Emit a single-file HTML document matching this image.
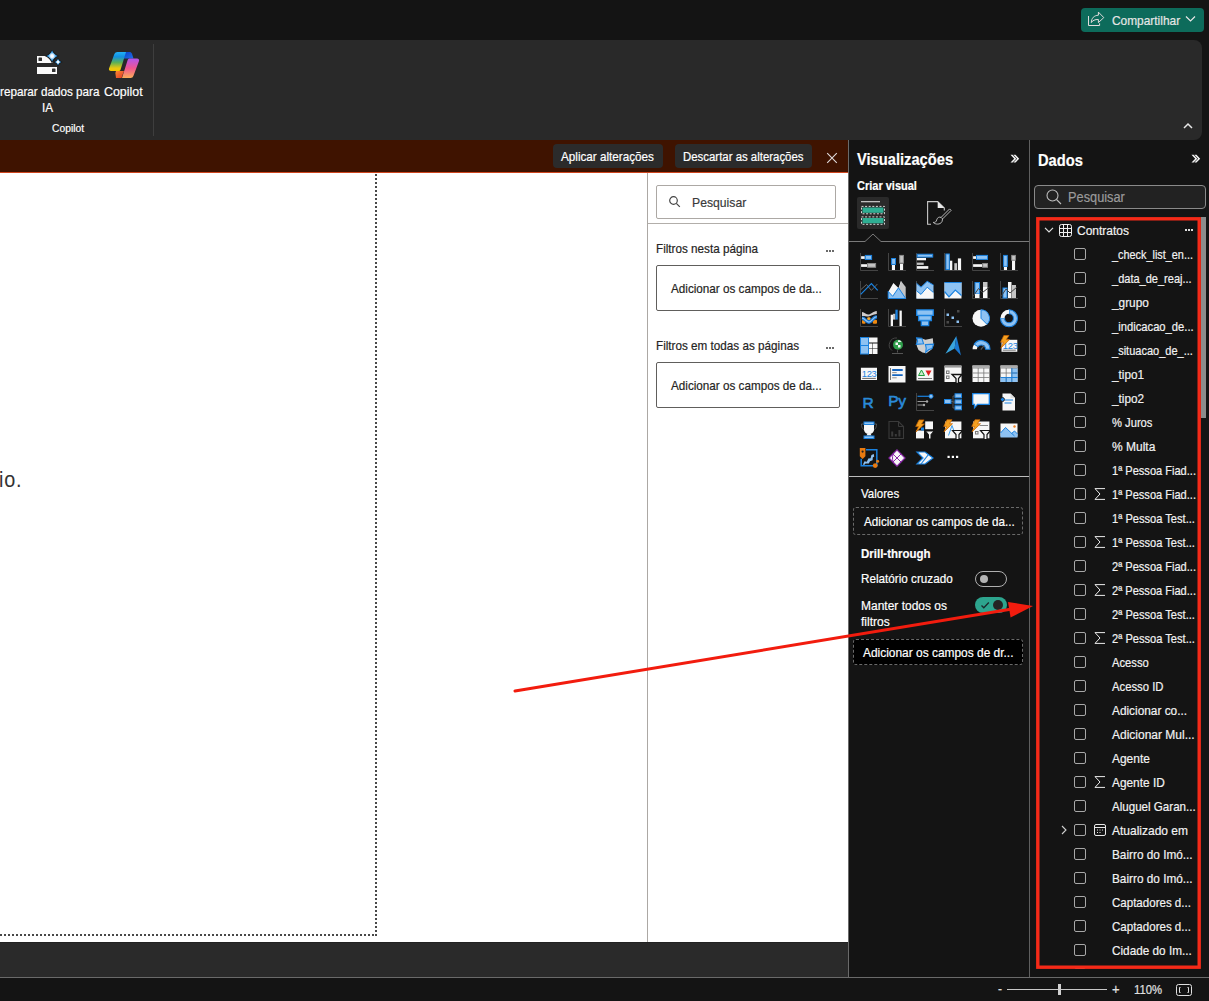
<!DOCTYPE html>
<html><head><meta charset="utf-8">
<style>
*{box-sizing:border-box;margin:0;padding:0}
html,body{width:1209px;height:1001px;overflow:hidden;background:#141414;font-family:"Liberation Sans",sans-serif;color:#fff}
.a{position:absolute}
.t{position:absolute;white-space:nowrap;font-size:12.75px;line-height:14px;transform-origin:0 0;transform:scaleX(0.9174)}
.t{-webkit-text-stroke:0.2px currentColor}
</style></head><body>
<!-- top bar -->
<div class="a" style="left:1081px;top:8px;width:123px;height:24px;background:#0d6b5b;border-radius:4px"></div>
<svg class="a" style="left:1087px;top:10px" width="18" height="18" viewBox="0 0 18 18" fill="none" stroke="#e0dcdc" stroke-width="1"><path d="M1.5 6V15.5H12.6V13.3"/><path d="M11.4 2.1L16.8 7.6 11.4 12.6V9.5C8 9.3 5.5 10.5 4.3 12.6 4.5 8 7 5.5 11.4 5.2Z" stroke-linejoin="round"/></svg>
<div class="t" style="left:1112px;top:14px;color:#e6e6e6;font-size:12.97px">Compartilhar</div>
<svg class="a" style="left:1185px;top:15px" width="11" height="8" viewBox="0 0 11 8" fill="none" stroke="#e6e6e6" stroke-width="1.2"><path d="M1 1.5l4.5 4.5 4.5-4.5"/></svg>
<!-- ribbon -->
<div class="a" style="left:-10px;top:40px;width:1212px;height:100px;background:#292929;border-radius:0 8px 8px 0"></div>
<div class="a" style="left:153px;top:44px;width:1px;height:92px;background:#3e3e3e"></div>
<div class="t" style="left:0px;top:85px;color:#fff">reparar dados para</div>
<div class="t" style="left:42px;top:101px;color:#fff">IA</div>
<div class="t" style="left:104px;top:85px;color:#fff;font-size:13.52px">Copilot</div>
<div class="t" style="left:52px;top:121px;color:#fff;font-size:11.23px">Copilot</div>
<!-- prepare data icon -->
<svg class="a" style="left:34px;top:50px" width="30" height="28" viewBox="0 0 30 28">
<defs><radialGradient id="spk" r=".5"><stop offset="0" stop-color="#fff"/><stop offset=".25" stop-color="#f4faff"/><stop offset=".7" stop-color="#2a98e8"/><stop offset="1" stop-color="#1a86d8"/></radialGradient></defs>
<path d="M3 6h12l4 5v2H3z" fill="#fafafa"/>
<rect x="4.5" y="7.5" width="3.5" height="3.5" rx=".6" fill="#333"/>
<rect x="3" y="17" width="20" height="7" fill="#fafafa"/>
<rect x="18" y="18.5" width="3.5" height="3.5" rx=".6" fill="#333"/>
<path d="M18.1 .3Q19.6 4.5 23.6 6 19.6 7.5 18.1 11.8 16.6 7.5 12.6 6 16.6 4.5 18.1 .3z" fill="#1a1a1a" transform="translate(18.1 6) scale(1.35) translate(-18.1 -6)"/>
<path d="M24 8.7Q24.9 11.1 27.3 12 24.9 12.9 24 15.3 23.1 12.9 20.7 12 23.1 11.1 24 8.7z" fill="#1a1a1a" transform="translate(24 12) scale(1.4) translate(-24 -12)"/>
<path d="M18.1 .3Q19.6 4.5 23.6 6 19.6 7.5 18.1 11.8 16.6 7.5 12.6 6 16.6 4.5 18.1 .3z" fill="url(#spk)"/>
<path d="M24 8.7Q24.9 11.1 27.3 12 24.9 12.9 24 15.3 23.1 12.9 20.7 12 23.1 11.1 24 8.7z" fill="url(#spk)"/>
</svg>
<!-- copilot icon -->
<svg class="a" style="left:104px;top:46px" width="40" height="36" viewBox="0 0 40 36">
<defs>
<linearGradient id="cg1" x1="0" y1="0" x2="0" y2="1"><stop offset="0" stop-color="#22b0f8"/><stop offset=".25" stop-color="#1290e0"/><stop offset=".55" stop-color="#5ab058"/><stop offset=".85" stop-color="#e8c810"/><stop offset="1" stop-color="#f5c800"/></linearGradient>
<linearGradient id="cg2" x1="0" y1="0" x2="0" y2="1"><stop offset="0" stop-color="#b055ee"/><stop offset=".5" stop-color="#f05590"/><stop offset="1" stop-color="#fcae58"/></linearGradient>
<linearGradient id="cg3" x1="0" y1="0" x2="1" y2="1"><stop offset="0" stop-color="#0a40c8"/><stop offset="1" stop-color="#2070e8"/></linearGradient>
<linearGradient id="cg4" x1="0" y1="0" x2="1" y2="1"><stop offset="0" stop-color="#fb8a30"/><stop offset="1" stop-color="#e03828"/></linearGradient>
</defs>
<path d="M20 6h5.5c1.2 0 2 .6 2.4 1.6L29.5 12.5H19z" fill="url(#cg3)"/>
<path d="M12 32h5.5l2.5-7h-8l-.6 2z" fill="url(#cg4)"/>
<path d="M13.5 6H22L16.6 23.5c-.4 1-1 1.5-2 1.5H7c-1.6 0-2.4-1-2-2.5l5.4-14.5C11 6.8 12 6 13.5 6z" fill="url(#cg1)"/>
<path d="M25.5 12.5H33c1.6 0 2.4 1 2 2.5l-5.4 14.5c-.6 1.7-1.6 2.5-3.1 2.5H18l5.5-17.5c.4-1.2 1-2 2-2z" fill="url(#cg2)"/>
</svg>
<svg class="a" style="left:1182px;top:122px" width="12" height="8" viewBox="0 0 12 8" fill="none" stroke="#e8e8e8" stroke-width="1.5"><path d="M2 6l4-4 4 4"/></svg>

<!-- brown bar -->
<div class="a" style="left:0;top:140px;width:848px;height:33px;background:#3f1300;border-bottom:1px solid #d0461e"></div>
<div class="a" style="left:553px;top:144px;width:110px;height:24px;background:#2b2b2b;border-radius:4px"></div>
<div class="t" style="left:561px;top:150px">Aplicar alterações</div>
<div class="a" style="left:675px;top:144px;width:137px;height:24px;background:#2b2b2b;border-radius:4px"></div>
<div class="t" style="left:683px;top:150px;font-size:12.45px">Descartar as alterações</div>
<svg class="a" style="left:826px;top:152px" width="12" height="12" viewBox="0 0 12 12" fill="none" stroke="#e0dcdc" stroke-width="1.1"><path d="M1.2 1.2l9.6 9.6M10.8 1.2l-9.6 9.6"/></svg>

<!-- canvas -->
<div class="a" style="left:0;top:173px;width:648px;height:769px;background:#fff"></div>
<div class="a" style="left:375px;top:174px;width:2px;height:762px;background:repeating-linear-gradient(to bottom,#484848 0 2px,transparent 2px 4px)"></div>
<div class="a" style="left:0px;top:934px;width:375px;height:2px;background:repeating-linear-gradient(to right,#484848 0 2px,transparent 2px 4px)"></div>
<div class="t" style="left:-1px;top:468px;color:#333;font-size:21.6px;line-height:24px;letter-spacing:0.9px;-webkit-text-stroke:0">io.</div>
<div class="a" style="left:0;top:942px;width:848px;height:35px;background:#2a2a2a;border-top:1px solid #222"></div>
<div class="a" style="left:0;top:977px;width:1209px;height:1px;background:#6a6a6a"></div>

<!-- filter pane -->
<div class="a" style="left:647px;top:173px;width:201px;height:769px;background:#fff;border-left:1px solid #aca8a4"></div>
<div class="a" style="left:656px;top:185px;width:180px;height:34px;border:1px solid #aca8a4;border-radius:2px"></div>
<svg class="a" style="left:668px;top:195px" width="14" height="14" viewBox="0 0 14 14" fill="none" stroke="#444" stroke-width="1.2"><circle cx="5.5" cy="5.5" r="3.8"/><path d="M8.3 8.3l3.5 3.5"/></svg>
<div class="t" style="left:692px;top:196px;color:#3a3a3a;font-size:13.30px">Pesquisar</div>
<div class="a" style="left:648px;top:223px;width:200px;height:1px;background:#b2aeaa"></div>
<div class="t" style="left:656px;top:242px;color:#252423">Filtros nesta página</div>
<div class="a" style="left:826px;top:250px;width:2px;height:2px;background:#6a6a6a;box-shadow:3px 0 #6a6a6a,6px 0 #6a6a6a"></div>
<div class="a" style="left:656px;top:265px;width:184px;height:46px;border:1px solid #605e5c;border-radius:2px"></div>
<div class="t" style="left:671px;top:282px;color:#252423">Adicionar os campos de da...</div>
<div class="t" style="left:656px;top:339px;color:#252423">Filtros em todas as páginas</div>
<div class="a" style="left:826px;top:347px;width:2px;height:2px;background:#6a6a6a;box-shadow:3px 0 #6a6a6a,6px 0 #6a6a6a"></div>
<div class="a" style="left:656px;top:362px;width:184px;height:46px;border:1px solid #605e5c;border-radius:2px"></div>
<div class="t" style="left:671px;top:379px;color:#252423">Adicionar os campos de da...</div>

<!-- viz panel -->
<div class="a" style="left:848px;top:140px;width:1px;height:837px;background:#6a6a6a"></div>
<div class="a" style="left:1029px;top:140px;width:1px;height:837px;background:#5f5f5f"></div>
<div class="t" style="left:857px;top:150px;font-size:16.02px;line-height:18px;font-weight:bold">Visualizações</div>
<svg class="a" style="left:1010px;top:154px" width="10" height="10" viewBox="0 0 10 10"><path d="M.5 .8H2.6L6.3 4.7 2.6 8.6H.5L4.2 4.7Z M3.4 .8H5.5L9.2 4.7 5.5 8.6H3.4L7.1 4.7Z" fill="#f4f4f4"/></svg>
<div class="t" style="left:857px;top:180px;font-size:11.99px;line-height:13px;font-weight:bold">Criar visual</div>
<div class="a" style="left:857px;top:197px;width:32px;height:32px;background:#2a2a2a;border-radius:2px"></div>
<svg class="a" style="left:857px;top:197px" width="32" height="32" viewBox="0 0 32 32">
<rect x="4" y="4" width="19" height="1.3" fill="#c0c0c0"/>
<rect x="4.5" y="9.4" width="23" height="7.4" fill="none" stroke="#d8d8d8" stroke-width="1" stroke-dasharray="2 1.6"/>
<rect x="5.5" y="10.5" width="21" height="5.3" fill="#2fae93"/>
<rect x="4.5" y="19.9" width="23" height="7.4" fill="none" stroke="#d8d8d8" stroke-width="1" stroke-dasharray="2 1.6"/>
<rect x="5.5" y="21" width="21" height="5.3" fill="#2fae93"/>
</svg>
<svg class="a" style="left:926px;top:200px" width="26" height="26" viewBox="0 0 26 26" fill="none" stroke="#c8c8c8" stroke-width="1.1">
<path d="M5 24.3H1.6V1.6H11.7L18.3 8.1V10.5"/><path d="M11.7 1.6L18.3 8.1H11.7z" fill="#e8e8e8" stroke="none"/>
<path d="M23.6 8.9L25.1 10.4 16.6 18.9 15.1 17.4Z" stroke-width=".9"/>
<path d="M15.1 17.4C13.2 16.6 11.3 17.6 10.7 19.8 10.3 21.8 9.2 22.6 7.2 22.4 9.3 24.6 14.2 25 16 21.6L16.6 18.9" stroke-width=".9"/>
</svg>
<svg class="a" style="left:849px;top:232px" width="180" height="12" viewBox="0 0 180 12" fill="none" stroke="#7a7a7a" stroke-width="1"><path d="M0 9.5h16l8-7.5 8 7.5H180"/></svg>
<div class="a" style="left:849px;top:476px;width:180px;height:1px;background:#bdbdbd"></div>
<div class="t" style="left:861px;top:487px;font-size:12.54px">Valores</div>
<div class="a" style="left:853px;top:507px;width:170px;height:28px;border:1px dashed #6a6a6a;border-radius:3px"></div>
<div class="t" style="left:864px;top:515px">Adicionar os campos de da...</div>
<div class="t" style="left:861px;top:547px;font-size:12.54px;font-weight:bold">Drill-through</div>
<div class="t" style="left:861px;top:572px">Relatório cruzado</div>
<div class="a" style="left:975px;top:571px;width:32px;height:16px;border:1px solid #b0b0b0;border-radius:8px"></div>
<div class="a" style="left:980px;top:575px;width:8px;height:8px;background:#b5b5b5;border-radius:50%"></div>
<div class="t" style="left:861px;top:599px;font-size:13.08px">Manter todos os</div>
<div class="t" style="left:861px;top:615px;font-size:13.08px">filtros</div>
<div class="a" style="left:975px;top:597px;width:32px;height:16px;background:#2da58e;border-radius:8px"></div>
<div class="a" style="left:993px;top:600px;width:10px;height:10px;background:#242424;border-radius:50%"></div>
<svg class="a" style="left:980px;top:600px" width="10" height="10" viewBox="0 0 10 10" fill="none" stroke="#1a2a2c" stroke-width="1.3"><path d="M1.5 5.5l2.3 2.3L8.8 2.5"/></svg>
<div class="a" style="left:853px;top:639px;width:170px;height:26px;border:1px dashed #6a6a6a;border-radius:3px;background:#000"></div>
<div class="t" style="left:863px;top:646px;font-size:13px">Adicionar os campos de dr...</div>

<!-- dados panel -->
<div class="t" style="left:1038px;top:151px;font-size:16.02px;line-height:18px;font-weight:bold">Dados</div>
<svg class="a" style="left:1191px;top:154px" width="10" height="10" viewBox="0 0 10 10"><path d="M.5 .8H2.6L6.3 4.7 2.6 8.6H.5L4.2 4.7Z M3.4 .8H5.5L9.2 4.7 5.5 8.6H3.4L7.1 4.7Z" fill="#f4f4f4"/></svg>
<div class="a" style="left:1034px;top:185px;width:172px;height:24px;border:1px solid #8a8a8a;border-radius:4px;background:#222"></div>
<svg class="a" style="left:1046px;top:189px" width="16" height="16" viewBox="0 0 16 16" fill="none" stroke="#bdbdbd" stroke-width="1.1"><circle cx="6.5" cy="6.5" r="5.5"/><path d="M10.5 10.5l4.5 4.5"/></svg>
<div class="t" style="left:1068px;top:189px;color:#9a9a9a;font-size:13.95px;line-height:16px">Pesquisar</div>

<!-- DADOS -->
<div class="a" style="left:1036px;top:215px;width:173px;height:754px;overflow:hidden">
<svg class="a" style="left:8px;top:12px" width="10" height="6" viewBox="0 0 10 6" fill="none" stroke="#e0e0e0" stroke-width="1.2"><path d="M1 .8l4 4 4-4"/></svg>
<svg class="a" style="left:23px;top:9px" width="13" height="13" viewBox="0 0 13 13" fill="none" stroke="#f0f0f0" stroke-width="1"><rect x=".5" y=".5" width="12" height="12" rx="2"/><path d="M4.5 .5v12M8.5 .5v12M.5 4.5h12M.5 8.5h12"/></svg>
<div class="t" style="left:41px;top:9px;color:#f2f2f2;font-size:13.08px">Contratos</div>
<div class="a" style="left:149px;top:14px;width:2px;height:2px;background:#e0e0e0;box-shadow:3px 0 #e0e0e0,6px 0 #e0e0e0"></div>
<div class="a" style="left:38px;top:33px;width:12px;height:12px;border:1px solid #a8a8a8;border-radius:2px"></div>
<div class="t" style="left:76px;top:33px;color:#f2f2f2;font-size:11.85px">_check_list_en...</div>
<div class="a" style="left:38px;top:57px;width:12px;height:12px;border:1px solid #a8a8a8;border-radius:2px"></div>
<div class="t" style="left:76px;top:57px;color:#f2f2f2;font-size:12.02px">_data_de_reaj...</div>
<div class="a" style="left:38px;top:81px;width:12px;height:12px;border:1px solid #a8a8a8;border-radius:2px"></div>
<div class="t" style="left:76px;top:81px;color:#f2f2f2;font-size:12.92px">_grupo</div>
<div class="a" style="left:38px;top:105px;width:12px;height:12px;border:1px solid #a8a8a8;border-radius:2px"></div>
<div class="t" style="left:76px;top:105px;color:#f2f2f2;font-size:12.23px">_indicacao_de...</div>
<div class="a" style="left:38px;top:129px;width:12px;height:12px;border:1px solid #a8a8a8;border-radius:2px"></div>
<div class="t" style="left:76px;top:129px;color:#f2f2f2;font-size:12.03px">_situacao_de_...</div>
<div class="a" style="left:38px;top:153px;width:12px;height:12px;border:1px solid #a8a8a8;border-radius:2px"></div>
<div class="t" style="left:76px;top:153px;color:#f2f2f2;font-size:12.8px">_tipo1</div>
<div class="a" style="left:38px;top:177px;width:12px;height:12px;border:1px solid #a8a8a8;border-radius:2px"></div>
<div class="t" style="left:76px;top:177px;color:#f2f2f2;font-size:12.8px">_tipo2</div>
<div class="a" style="left:38px;top:201px;width:12px;height:12px;border:1px solid #a8a8a8;border-radius:2px"></div>
<div class="t" style="left:76px;top:201px;color:#f2f2f2;font-size:12.21px">% Juros</div>
<div class="a" style="left:38px;top:225px;width:12px;height:12px;border:1px solid #a8a8a8;border-radius:2px"></div>
<div class="t" style="left:76px;top:225px;color:#f2f2f2;font-size:13.08px">% Multa</div>
<div class="a" style="left:38px;top:249px;width:12px;height:12px;border:1px solid #a8a8a8;border-radius:2px"></div>
<div class="t" style="left:76px;top:249px;color:#f2f2f2;font-size:12.06px">1ª Pessoa Fiad...</div>
<div class="a" style="left:38px;top:273px;width:12px;height:12px;border:1px solid #a8a8a8;border-radius:2px"></div>
<svg class="a" style="left:58px;top:273px" width="11" height="12" viewBox="0 0 11 12" fill="none" stroke="#ececec" stroke-width="1"><path d="M11 .6H1L6 6 1 11.4H11"/></svg>
<div class="t" style="left:76px;top:273px;color:#f2f2f2;font-size:12.06px">1ª Pessoa Fiad...</div>
<div class="a" style="left:38px;top:297px;width:12px;height:12px;border:1px solid #a8a8a8;border-radius:2px"></div>
<div class="t" style="left:76px;top:297px;color:#f2f2f2;font-size:12.12px">1ª Pessoa Test...</div>
<div class="a" style="left:38px;top:321px;width:12px;height:12px;border:1px solid #a8a8a8;border-radius:2px"></div>
<svg class="a" style="left:58px;top:321px" width="11" height="12" viewBox="0 0 11 12" fill="none" stroke="#ececec" stroke-width="1"><path d="M11 .6H1L6 6 1 11.4H11"/></svg>
<div class="t" style="left:76px;top:321px;color:#f2f2f2;font-size:12.12px">1ª Pessoa Test...</div>
<div class="a" style="left:38px;top:345px;width:12px;height:12px;border:1px solid #a8a8a8;border-radius:2px"></div>
<div class="t" style="left:76px;top:345px;color:#f2f2f2;font-size:12.06px">2ª Pessoa Fiad...</div>
<div class="a" style="left:38px;top:369px;width:12px;height:12px;border:1px solid #a8a8a8;border-radius:2px"></div>
<svg class="a" style="left:58px;top:369px" width="11" height="12" viewBox="0 0 11 12" fill="none" stroke="#ececec" stroke-width="1"><path d="M11 .6H1L6 6 1 11.4H11"/></svg>
<div class="t" style="left:76px;top:369px;color:#f2f2f2;font-size:12.06px">2ª Pessoa Fiad...</div>
<div class="a" style="left:38px;top:393px;width:12px;height:12px;border:1px solid #a8a8a8;border-radius:2px"></div>
<div class="t" style="left:76px;top:393px;color:#f2f2f2;font-size:12.12px">2ª Pessoa Test...</div>
<div class="a" style="left:38px;top:417px;width:12px;height:12px;border:1px solid #a8a8a8;border-radius:2px"></div>
<svg class="a" style="left:58px;top:417px" width="11" height="12" viewBox="0 0 11 12" fill="none" stroke="#ececec" stroke-width="1"><path d="M11 .6H1L6 6 1 11.4H11"/></svg>
<div class="t" style="left:76px;top:417px;color:#f2f2f2;font-size:12.12px">2ª Pessoa Test...</div>
<div class="a" style="left:38px;top:441px;width:12px;height:12px;border:1px solid #a8a8a8;border-radius:2px"></div>
<div class="t" style="left:76px;top:441px;color:#f2f2f2;font-size:12.23px">Acesso</div>
<div class="a" style="left:38px;top:465px;width:12px;height:12px;border:1px solid #a8a8a8;border-radius:2px"></div>
<div class="t" style="left:76px;top:465px;color:#f2f2f2;font-size:12.32px">Acesso ID</div>
<div class="a" style="left:38px;top:489px;width:12px;height:12px;border:1px solid #a8a8a8;border-radius:2px"></div>
<div class="t" style="left:76px;top:489px;color:#f2f2f2;font-size:12.91px">Adicionar co...</div>
<div class="a" style="left:38px;top:513px;width:12px;height:12px;border:1px solid #a8a8a8;border-radius:2px"></div>
<div class="t" style="left:76px;top:513px;color:#f2f2f2;font-size:13.08px">Adicionar Mul...</div>
<div class="a" style="left:38px;top:537px;width:12px;height:12px;border:1px solid #a8a8a8;border-radius:2px"></div>
<div class="t" style="left:76px;top:537px;color:#f2f2f2;font-size:13.04px">Agente</div>
<div class="a" style="left:38px;top:561px;width:12px;height:12px;border:1px solid #a8a8a8;border-radius:2px"></div>
<svg class="a" style="left:58px;top:561px" width="11" height="12" viewBox="0 0 11 12" fill="none" stroke="#ececec" stroke-width="1"><path d="M11 .6H1L6 6 1 11.4H11"/></svg>
<div class="t" style="left:76px;top:561px;color:#f2f2f2;font-size:12.94px">Agente ID</div>
<div class="a" style="left:38px;top:585px;width:12px;height:12px;border:1px solid #a8a8a8;border-radius:2px"></div>
<div class="t" style="left:76px;top:585px;color:#f2f2f2;font-size:12.64px">Aluguel Garan...</div>
<div class="a" style="left:38px;top:609px;width:12px;height:12px;border:1px solid #a8a8a8;border-radius:2px"></div>
<svg class="a" style="left:25px;top:610px" width="6" height="10" viewBox="0 0 6 10" fill="none" stroke="#d0d0d0" stroke-width="1.1"><path d="M1 1l4 4-4 4"/></svg>
<svg class="a" style="left:58px;top:609px" width="12" height="12" viewBox="0 0 12 12" fill="none" stroke="#e8e8e8" stroke-width="1"><rect x=".5" y=".5" width="11" height="11" rx="1.5"/><path d="M.5 3.5h11"/><path d="M3 6h1M5.5 6h1M8 6h1M3 8.5h1M5.5 8.5h1" stroke-width="1.2"/></svg>
<div class="t" style="left:76px;top:609px;color:#f2f2f2;font-size:13.07px">Atualizado em</div>
<div class="a" style="left:38px;top:633px;width:12px;height:12px;border:1px solid #a8a8a8;border-radius:2px"></div>
<div class="t" style="left:76px;top:633px;color:#f2f2f2;font-size:12.87px">Bairro do Imó...</div>
<div class="a" style="left:38px;top:657px;width:12px;height:12px;border:1px solid #a8a8a8;border-radius:2px"></div>
<div class="t" style="left:76px;top:657px;color:#f2f2f2;font-size:12.87px">Bairro do Imó...</div>
<div class="a" style="left:38px;top:681px;width:12px;height:12px;border:1px solid #a8a8a8;border-radius:2px"></div>
<div class="t" style="left:76px;top:681px;color:#f2f2f2;font-size:12.59px">Captadores d...</div>
<div class="a" style="left:38px;top:705px;width:12px;height:12px;border:1px solid #a8a8a8;border-radius:2px"></div>
<div class="t" style="left:76px;top:705px;color:#f2f2f2;font-size:12.59px">Captadores d...</div>
<div class="a" style="left:38px;top:729px;width:12px;height:12px;border:1px solid #a8a8a8;border-radius:2px"></div>
<div class="t" style="left:76px;top:729px;color:#f2f2f2;font-size:12.83px">Cidade do Im...</div>
<div class="a" style="left:38px;top:753px;width:12px;height:12px;border:1px solid #a8a8a8;border-radius:2px"></div>
</div>
<div class="a" style="left:1201px;top:217px;width:5px;height:201px;background:#8c8c8c"></div>
<svg class="a" style="left:1030px;top:210px" width="179" height="765" viewBox="0 0 179 765" fill="none"><rect x="7.8" y="8.8" width="161.4" height="748.4" stroke="#f52a18" stroke-width="3.4"/></svg>
<!-- /DADOS -->
<!-- ICONS -->
<svg class="a" style="left:860px;top:253px;overflow:visible" width="18" height="18" viewBox="0 0 18 18"><path d="M.5 0v17.5H18" fill="none" stroke="#444" stroke-width="1"/><rect x="1.1" y="3.2" width="3.7" height="2.7" fill="#f7f7f7"/><rect x="5.3" y="2.4" width="6.3" height="4" fill="#8ec2f2" stroke="#1a82e0" stroke-width="1"/><rect x="1.1" y="11.2" width="6" height="2.7" fill="#f7f7f7"/><rect x="7.6" y="10.5" width="8" height="3.75" fill="#c4c4c4" stroke="#8a8a8a" stroke-width="1"/></svg>
<svg class="a" style="left:888px;top:253px;overflow:visible" width="18" height="18" viewBox="0 0 18 18"><path d="M.5 0v17.5H18" fill="none" stroke="#444" stroke-width="1"/><rect x="3.9" y="11.9" width="3.1" height="5.1" fill="#f7f7f7"/><rect x="3.6" y="5.5" width="3.9" height="5.9" fill="#8ec2f2" stroke="#1a82e0" stroke-width="1"/><rect x="12" y="10.6" width="3.1" height="6.4" fill="#f7f7f7"/><rect x="11.7" y="2.4" width="3.7" height="7.7" fill="#c4c4c4" stroke="#8a8a8a" stroke-width="1"/></svg>
<svg class="a" style="left:916px;top:253px;overflow:visible" width="18" height="18" viewBox="0 0 18 18"><path d="M.5 0v17.5H18" fill="none" stroke="#444" stroke-width="1"/><rect x="1.2" y="1.2" width="15.5" height="2.9" fill="#8ec2f2" stroke="#1a82e0" stroke-width="1"/><rect x="0.9" y="5" width="9.1" height="2.3" fill="#f7f7f7"/><rect x="0.9" y="9.6" width="6.8" height="2.3" fill="#c4c4c4"/><rect x="0.9" y="13.1" width="11.4" height="2.7" fill="#f7f7f7"/></svg>
<svg class="a" style="left:944px;top:253px;overflow:visible" width="18" height="18" viewBox="0 0 18 18"><path d="M.5 0v17.5H18" fill="none" stroke="#444" stroke-width="1"/><rect x="1.9" y="1" width="3.4" height="15.5" fill="#8ec2f2" stroke="#1a82e0" stroke-width="1"/><rect x="6" y="7.7" width="2.3" height="9.3" fill="#f7f7f7"/><rect x="10.3" y="10.2" width="2.7" height="6.8" fill="#c4c4c4"/><rect x="13.9" y="5.4" width="3.2" height="11.6" fill="#f7f7f7"/></svg>
<svg class="a" style="left:972px;top:253px;overflow:visible" width="18" height="18" viewBox="0 0 18 18"><path d="M.5 0v17.5H18" fill="none" stroke="#444" stroke-width="1"/><rect x="1.1" y="3.2" width="2.9" height="2.7" fill="#f7f7f7"/><rect x="4.5" y="2.4" width="11" height="4" fill="#8ec2f2" stroke="#1a82e0" stroke-width="1"/><rect x="1.1" y="11.2" width="9.1" height="2.7" fill="#f7f7f7"/><rect x="10.7" y="10.5" width="4.8" height="3.75" fill="#c4c4c4" stroke="#8a8a8a" stroke-width="1"/></svg>
<svg class="a" style="left:1000px;top:253px;overflow:visible" width="18" height="18" viewBox="0 0 18 18"><path d="M.5 0v17.5H18" fill="none" stroke="#444" stroke-width="1"/><rect x="3.6" y="2.4" width="3.7" height="11" fill="#8ec2f2" stroke="#1a82e0" stroke-width="1"/><rect x="3.9" y="13.9" width="3.1" height="3.1" fill="#f7f7f7"/><rect x="11.7" y="2.4" width="3.7" height="4.8" fill="#c4c4c4" stroke="#8a8a8a" stroke-width="1"/><rect x="12" y="7.7" width="3.1" height="9.3" fill="#f7f7f7"/></svg>
<svg class="a" style="left:860px;top:281px;overflow:visible" width="18" height="18" viewBox="0 0 18 18"><path d="M.5 0v17.5H18" fill="none" stroke="#444" stroke-width="1"/><path d="M1 8.5L6.5 3.5 11.4 9.4 17.3 3.1" fill="none" stroke="#666" stroke-width="1"/><path d="M.7 13.4L11.4 2.6 17.7 9.4" fill="none" stroke="#1a82e0" stroke-width="1.2"/></svg>
<svg class="a" style="left:888px;top:281px;overflow:visible" width="18" height="18" viewBox="0 0 18 18"><path d="M.5 10.4L5.4 2 10.5 7 13 -.3 17.7 17.5H.5z" fill="#f7f7f7"/><path d="M13 0L17.7 6V17.5L11 7.5z" fill="#c4c4c4"/><path d="M.2 10.4L4.7 15.3 10.5 6.8 17.7 17.5H.2z" fill="#8ec2f2" stroke="#1a82e0" stroke-width="1"/></svg>
<svg class="a" style="left:916px;top:281px;overflow:visible" width="18" height="18" viewBox="0 0 18 18"><path d="M.5 0v17.5H18" fill="none" stroke="#444" stroke-width="1"/><path d="M.5 2.2L5 6.2 11.2 .3 17.5 4V17.5H.5z" fill="#8ec2f2"/><path d="M.5 9.8L5 13.4 11.2 6.2 17.5 11.6V17.5H.5z" fill="#f7f7f7"/><path d="M.5 2.2L5 6.2 11.2 .3 17.5 4M.5 9.8L5 13.4 11.2 6.2 17.5 11.6" fill="none" stroke="#1a82e0" stroke-width="1"/></svg>
<svg class="a" style="left:944px;top:281px;overflow:visible" width="18" height="18" viewBox="0 0 18 18"><path d="M.5 1.5H17.5V17.5H.5z" fill="#f7f7f7"/><path d="M.5 1.5H17.5V14.5L11.3 9.1 5 15.9.5 10.5z" fill="#8ec2f2"/><path d="M.5 1.5H17.5M.5 10.5L5 15.9 11.3 9.1 17.5 14.5" fill="none" stroke="#1a82e0" stroke-width="1.2"/></svg>
<svg class="a" style="left:972px;top:281px;overflow:visible" width="18" height="18" viewBox="0 0 18 18"><path d="M.5 0v17.5H18" fill="none" stroke="#444" stroke-width="1"/><rect x="3" y="1.5" width="4.5" height="11.5" fill="#8ec2f2" stroke="#1a82e0" stroke-width="1"/><rect x="3" y="13" width="4.5" height="4" fill="#f7f7f7"/><rect x="11" y="1" width="4.5" height="5" fill="#c4c4c4"/><rect x="11" y="6" width="4.5" height="11" fill="#f7f7f7"/><path d="M1 15.5L6.5 7.5 10.5 11.5 17.5 6" fill="none" stroke="#444" stroke-width="1"/></svg>
<svg class="a" style="left:1000px;top:281px;overflow:visible" width="18" height="18" viewBox="0 0 18 18"><path d="M.5 0v17.5H18" fill="none" stroke="#444" stroke-width="1"/><rect x="3" y="7" width="4" height="10" fill="#8ec2f2" stroke="#1a82e0" stroke-width="1"/><rect x="8" y="1" width="3.5" height="16" fill="#f7f7f7"/><rect x="12" y="4" width="4" height="13" fill="#c4c4c4"/><path d="M1 15.5L6 8 10 12 17 6" fill="none" stroke="#444" stroke-width="1"/></svg>
<svg class="a" style="left:860px;top:309px;overflow:visible" width="18" height="18" viewBox="0 0 18 18"><path d="M.5 0v17.5H18" fill="none" stroke="#444" stroke-width="1"/><path d="M2 3C4.5 3.5 6.5 5.6 8.5 5.6S13 2.5 16.8 2V5.1C13 5.5 10.5 7.4 8.5 7.4S4.5 6.9 2 6.9Z" fill="#d0cccc"/><rect x="2" y="11" width="3.5" height="3.8" rx="1" fill="#f08a10"/><rect x="12.8" y="10.8" width="4.2" height="3.9" rx="1" fill="#f08a10"/><rect x="7.2" y="8.2" width="3.3" height="3.2" rx="1" fill="#f5a830"/><path d="M2 9C5 9.5 6.5 13.1 9 13.1S13 8.2 16.8 7.7" fill="none" stroke="#1572d0" stroke-width="3.6"/><path d="M2 9C5 9.5 6.5 13.1 9 13.1S13 8.2 16.8 7.7" fill="none" stroke="#8cc4f4" stroke-width="1.3"/></svg>
<svg class="a" style="left:888px;top:309px;overflow:visible" width="18" height="18" viewBox="0 0 18 18"><path d="M.5 0v17.5H18" fill="none" stroke="#444" stroke-width="1"/><rect x="2.7" y="5.7" width="2.3" height="11.3" fill="#f7f7f7"/><rect x="5" y="4.8" width="2.4" height="5.8" fill="#c4c4c4"/><rect x="7.4" y="0.7" width="2.3" height="9.9" fill="#1a82e0"/><rect x="11.5" y="1.6" width="2.3" height="15.4" fill="#f7f7f7"/></svg>
<svg class="a" style="left:916px;top:309px;overflow:visible" width="18" height="18" viewBox="0 0 18 18"><path d="M.7 .9h16.6v5.4H.7z" fill="#8ec2f2" stroke="#1a82e0" stroke-width="1.3"/><path d="M2.6 6.6h12.8v4.9H2.6z" fill="#8ec2f2" stroke="#1a82e0" stroke-width="1.3"/><path d="M5.3 11.8h7.4v4.9H5.3z" fill="#8ec2f2" stroke="#1a82e0" stroke-width="1.3"/></svg>
<svg class="a" style="left:944px;top:309px;overflow:visible" width="18" height="18" viewBox="0 0 18 18"><path d="M.5 0v17.5H18" fill="none" stroke="#444" stroke-width="1"/><rect x="2.5" y="4.5" width="2.5" height="2.5" fill="#8ec2f2"/><rect x="7.5" y="7.5" width="2.5" height="2.5" fill="#8ec2f2"/><rect x="12.5" y="11.5" width="2.5" height="2.5" fill="#8ec2f2"/><rect x="13" y="1" width="2.5" height="2.5" fill="#4a4a4a"/><rect x="2.5" y="12" width="2.5" height="2.5" fill="#4a4a4a"/></svg>
<svg class="a" style="left:972px;top:309px;overflow:visible" width="18" height="18" viewBox="0 0 18 18"><circle cx="9" cy="9.3" r="8.5" fill="#f7f7f7"/><path d="M9 9.3V.8A8.5 8.5 0 0 1 15 15.3z" fill="#8ec2f2" stroke="#1a82e0" stroke-width="1"/></svg>
<svg class="a" style="left:1000px;top:309px;overflow:visible" width="18" height="18" viewBox="0 0 18 18"><path d="M9 .8A8.5 8.5 0 1 1 .5 9.3H4.5A4.5 4.5 0 1 0 9 4.8z" fill="#8ec2f2" stroke="#1a82e0" stroke-width="1.1"/><path d="M.5 9.3A8.5 8.5 0 0 1 9 .8V4.8A4.5 4.5 0 0 0 4.5 9.3z" fill="#f7f7f7"/></svg>
<svg class="a" style="left:860px;top:337px;overflow:visible" width="18" height="18" viewBox="0 0 18 18"><rect x="0.5" y="0.5" width="8" height="8" fill="#8ec2f2" stroke="#1a82e0" stroke-width="1"/><rect x="0.5" y="8.5" width="8" height="8.5" fill="#8ec2f2" stroke="#1a82e0" stroke-width="1"/><rect x="9" y="0.5" width="8.5" height="5" fill="#f7f7f7"/><rect x="9" y="6.5" width="3.5" height="5" fill="#f7f7f7"/><rect x="13" y="6.5" width="4.5" height="5" fill="#f7f7f7"/><rect x="13" y="12" width="4.5" height="5" fill="#f7f7f7"/><rect x="9" y="12" width="3.5" height="5" fill="#f7f7f7"/></svg>
<svg class="a" style="left:888px;top:337px;overflow:visible" width="18" height="18" viewBox="0 0 18 18"><path d="M4 13.5A7 7 0 0 1 9 1" fill="none" stroke="#444" stroke-width="1"/><circle cx="10" cy="7.8" r="5" fill="#2e9e4a"/><path d="M7.5 5.5h2.5v2.5h2.5v2.5H10V8H7.5z" fill="#f7f7f7"/><path d="M10 3.3h2l1.5 1.8h-3.5z" fill="#f7f7f7"/><path d="M9.5 13.3v2.2M4 16.5h11" stroke="#555" stroke-width="1"/></svg>
<svg class="a" style="left:916px;top:337px;overflow:visible" width="18" height="18" viewBox="0 0 18 18"><path d="M.5 3.5L6.5 1.8 9.5 2.8 16.8 1.3 17.5 8.5 15.5 12.5 10.5 16.3 6.5 15.5 2.5 13 .8 9z" fill="#cfcfcf"/><path d="M.6 .9L5.8 1.2 7.6 6.8 .3 7.4 1.6 4.2z" fill="#8ec2f2" stroke="#1a82e0" stroke-width="1.1"/><path d="M9.4 7.6L17.6 7.1 16 11.6 12.5 12.8 9.7 15.4 10.2 11z" fill="#8ec2f2" stroke="#1a82e0" stroke-width="1.1"/></svg>
<svg class="a" style="left:944px;top:337px;overflow:visible" width="18" height="18" viewBox="0 0 18 18"><path d="M12.4 -1L10.6 11.6 1.4 16.8z" fill="#3aa6e0"/><path d="M12.4 -1L10.6 11.6 17 18.6z" fill="#1a78d0"/></svg>
<svg class="a" style="left:972px;top:337px;overflow:visible" width="18" height="18" viewBox="0 0 18 18"><path d="M.6 12.2A8.7 8.7 0 0 1 2.2 7.2L5.9 9.6A4.4 4.4 0 0 0 4.9 12.2z" fill="#f7f7f7"/><path d="M2.2 7.2A8.7 8.7 0 0 1 18 12.2H13.7A4.4 4.4 0 0 0 5.9 9.6z" fill="#8ec2f2" stroke="#1a82e0" stroke-width="1.1"/><path d="M8.8 12.6l3.4-4.2" stroke="#555" stroke-width="1.2"/></svg>
<svg class="a" style="left:1000px;top:337px;overflow:visible" width="18" height="18" viewBox="0 0 18 18"><rect x="1.5" y="2.8" width="15.8" height="12" fill="#f7f7f7"/><text x="10.2" y="11.5" font-family="Liberation Sans" font-size="9.4" fill="#1a82e0" text-anchor="middle" letter-spacing="-.3">123</text><path d="M2.8 13.2h13" stroke="#666" stroke-width=".9"/><path d="M3.8 -1.5h5.2L6.3 2.6h3.2L.8 11.2 3.4 5.2H.6z" fill="#f5a020" stroke="#c86400" stroke-width=".7"/></svg>
<svg class="a" style="left:860px;top:365px;overflow:visible" width="18" height="18" viewBox="0 0 18 18"><rect x="0.9" y="2.75" width="16.1" height="12.25" fill="#f7f7f7"/><text x="9.1" y="11.8" font-family="Liberation Sans" font-size="9.4" fill="#1a82e0" text-anchor="middle" letter-spacing="-.3">123</text><path d="M2.2 13.4h13.6" stroke="#666" stroke-width="1"/></svg>
<svg class="a" style="left:888px;top:365px;overflow:visible" width="18" height="18" viewBox="0 0 18 18"><rect x="0.5" y="1" width="17" height="16.5" fill="#f7f7f7"/><path d="M2.5 3v12" stroke="#666" stroke-width=".9"/><path d="M4.2 5h10.5M4.2 10.2h10.5" stroke="#1565c0" stroke-width="1.8"/><path d="M4.2 7.6h4.5M4.2 12.8h4.5" stroke="#888" stroke-width=".9"/></svg>
<svg class="a" style="left:916px;top:365px;overflow:visible" width="18" height="18" viewBox="0 0 18 18"><rect x="0.5" y="2.5" width="17" height="13" fill="#f7f7f7"/><path d="M2.5 10.5L5.5 5 8.5 10.5z" fill="#cfe8cf" stroke="#1e9e3a" stroke-width="1"/><path d="M9.5 5.5h6L12.5 11z" fill="#e02020"/><path d="M2 13.5h14" stroke="#777" stroke-width="1"/></svg>
<svg class="a" style="left:944px;top:365px;overflow:visible" width="18" height="18" viewBox="0 0 18 18"><rect x="0.5" y="0.5" width="17" height="16.5" fill="#f7f7f7"/><path d="M.5 1.8h17" stroke="#999" stroke-width="1.6"/><rect x="2.5" y="6" width="2.5" height="2.5" fill="none" stroke="#777" stroke-width="1"/><rect x="2.5" y="11" width="2.5" height="2.5" fill="none" stroke="#777" stroke-width="1"/><path d="M8 9.5h10l-3.5 4v5h-2.5v-5z" fill="#f7f7f7" stroke="#141414" stroke-width="1.3"/></svg>
<svg class="a" style="left:972px;top:365px;overflow:visible" width="18" height="18" viewBox="0 0 18 18"><rect x="0.5" y="0.5" width="17" height="16.5" fill="#f7f7f7"/><path d="M.5 1.5h17" stroke="#aaa" stroke-width="2"/><path d="M.5 3h17M.5 8h17M.5 12.5h17M6.2 3v14M11.8 3v14" stroke="#777" stroke-width=".8"/></svg>
<svg class="a" style="left:1000px;top:365px;overflow:visible" width="18" height="18" viewBox="0 0 18 18"><rect x="0.5" y="0.5" width="17" height="16.5" fill="#f7f7f7"/><rect x="11.8" y="3" width="5.7" height="14" fill="#8ec2f2"/><rect x="0.5" y="12.5" width="11.3" height="4.5" fill="#8ec2f2"/><path d="M.5 1.5h17" stroke="#aaa" stroke-width="2"/><path d="M.5 3h17M.5 8h17M.5 12.5h17" stroke="#777" stroke-width=".8"/><path d="M6.2 3v14M11.8 3v14" stroke="#777" stroke-width=".8"/><path d="M11.8 8h5.7M11.8 12.5h5.7M.5 12.5h17M6.2 12.5v4.5M11.8 3v14" stroke="#1a82e0" stroke-width=".9"/></svg>
<svg class="a" style="left:860px;top:393px;overflow:visible" width="18" height="18" viewBox="0 0 18 18"><text x="8" y="14.8" font-family="Liberation Sans" font-size="15.5" fill="#2a8ad8" stroke="#2a8ad8" stroke-width=".6" text-anchor="middle">R</text></svg>
<svg class="a" style="left:888px;top:393px;overflow:visible" width="18" height="18" viewBox="0 0 18 18"><text x="9" y="13" font-family="Liberation Sans" font-size="15.5" fill="#2a8ad8" stroke="#2a8ad8" stroke-width=".6" text-anchor="middle" letter-spacing="-0.2">Py</text></svg>
<svg class="a" style="left:916px;top:393px;overflow:visible" width="18" height="18" viewBox="0 0 18 18"><path d="M.5 0v17.5H18" fill="none" stroke="#444" stroke-width="1"/><path d="M1.5 3.3h14" stroke="#1a82e0" stroke-width="1.2"/><circle cx="15" cy="3.3" r="2" fill="#8ec2f2" stroke="#1a82e0"/><path d="M1.5 8.5h10" stroke="#999"/><circle cx="11" cy="8.5" r="1.2" fill="#aaa"/><path d="M1.5 12h6.5" stroke="#999"/><circle cx="8" cy="12" r="1.2" fill="#aaa"/></svg>
<svg class="a" style="left:944px;top:393px;overflow:visible" width="18" height="18" viewBox="0 0 18 18"><path d="M6 8.5h3M9 3v12M9 3h2M9 9h2M9 15h2" fill="none" stroke="#666" stroke-width=".8"/><rect x="0.5" y="6.5" width="6.5" height="4" fill="#8ec2f2" stroke="#1a82e0" stroke-width="1"/><rect x="11" y="0.8" width="6.5" height="4" fill="#8ec2f2" stroke="#1a82e0" stroke-width="1"/><rect x="11" y="6.8" width="6.5" height="4" fill="#8ec2f2" stroke="#1a82e0" stroke-width="1"/><rect x="11" y="12.8" width="6.5" height="4" fill="#8ec2f2" stroke="#1a82e0" stroke-width="1"/></svg>
<svg class="a" style="left:972px;top:393px;overflow:visible" width="18" height="18" viewBox="0 0 18 18"><path d="M.7 .7h16.6v10.6H5.5l-3 3.5v-3.5H.7z" fill="#f7f7f7" stroke="#1a82e0" stroke-width="1.3"/></svg>
<svg class="a" style="left:1000px;top:393px;overflow:visible" width="18" height="18" viewBox="0 0 18 18"><path d="M2.5 .5h8l4.5 4.5v12.5h-12.5z" fill="#f7f7f7"/><path d="M10.5 .5v4.5h4.5" fill="#ddd"/><circle cx="2.5" cy="6.5" r="2" fill="#1a82e0" stroke="#141414" stroke-width=".8"/><path d="M5 7h8M4.5 10h7" stroke="#1a82e0" stroke-width="1"/></svg>
<svg class="a" style="left:860px;top:421px;overflow:visible" width="18" height="18" viewBox="0 0 18 18"><path d="M3.5 3H1.5c0 4 1.5 5.5 3.5 6M14.5 3h2c0 4-1.5 5.5-3.5 6" fill="none" stroke="#555" stroke-width="1"/><path d="M4 3.5h10v5c0 2.5-2 4.5-5 4.5s-5-2-5-4.5z" fill="#f7f7f7"/><path d="M7.5 12.5h3l1 2h-5z" fill="#f7f7f7"/><rect x="4" y="1" width="10" height="2.5" fill="#8ec2f2" stroke="#1a82e0" stroke-width="1"/><rect x="4" y="15" width="10" height="2.5" fill="#8ec2f2" stroke="#1a82e0" stroke-width="1"/></svg>
<svg class="a" style="left:888px;top:421px;overflow:visible" width="18" height="18" viewBox="0 0 18 18"><path d="M1 .5h9.5l5 5v12H1z" fill="none" stroke="#3a3a3a" stroke-width="1.1"/><path d="M10.5 .5v5h5" fill="none" stroke="#3a3a3a" stroke-width="1"/><path d="M4.2 10.5v5M7.8 13v2.5M11.4 9v6.5" stroke="#3a3a3a" stroke-width="2"/></svg>
<svg class="a" style="left:916px;top:421px;overflow:visible" width="18" height="18" viewBox="0 0 18 18"><rect x="9.2" y="0.4" width="7.8" height="7.8" fill="#f7f7f7"/><rect x="0" y="9.5" width="8" height="7.9" fill="#f7f7f7"/><path d="M5 6.5h3v3H5z" fill="#1a82e0"/><path d="M9.5 10h8.5l-3 3.5v4.5h-2.5v-4.5z" fill="#f7f7f7" stroke="#141414" stroke-width="1"/><path d="M3 -1.1h5l-2.5 4h3L0 11l2.5-5.5H-.3z" fill="#f5a020" stroke="#c86400" stroke-width=".7"/></svg>
<svg class="a" style="left:944px;top:421px;overflow:visible" width="18" height="18" viewBox="0 0 18 18"><rect x="1" y="0.5" width="16.4" height="16.8" fill="#f7f7f7"/><path d="M4.5 14.5l3.5-10 2.5 7" fill="none" stroke="#3aa0f0" stroke-width="1"/><path d="M8.5 9.5h10l-3.5 4v5h-3v-5z" fill="#f7f7f7" stroke="#141414" stroke-width="1.2"/><path d="M3 -1.3h5l-2.5 4h3L0 10.9l2.5-5.5H-.3z" fill="#f5a020" stroke="#c86400" stroke-width=".7"/></svg>
<svg class="a" style="left:972px;top:421px;overflow:visible" width="18" height="18" viewBox="0 0 18 18"><rect x="1" y="0.5" width="16.4" height="16.8" fill="#f7f7f7"/><path d="M7.5 4.5h8.5" stroke="#888" stroke-width="1"/><rect x="3.5" y="10.5" width="2.5" height="2.5" fill="none" stroke="#777" stroke-width="1"/><path d="M8.5 9.5h10l-3.5 4v5h-3v-5z" fill="#f7f7f7" stroke="#141414" stroke-width="1.2"/><path d="M3 -1.3h5l-2.5 4h3L0 10.9l2.5-5.5H-.3z" fill="#f5a020" stroke="#c86400" stroke-width=".7"/></svg>
<svg class="a" style="left:1000px;top:421px;overflow:visible" width="18" height="18" viewBox="0 0 18 18"><rect x="0.5" y="2.5" width="17" height="13" fill="#f7f7f7"/><path d="M.5 12L5.5 6.5l6 6 3-2.5 3 3v3.5H.5z" fill="#8ec2f2"/><path d="M.5 12L5.5 6.5l9 8.5M11.5 12.5l3-2.5 3 3" fill="none" stroke="#1a82e0" stroke-width="1"/><circle cx="14.5" cy="5.5" r="1.2" fill="#f08020"/></svg>
<svg class="a" style="left:860px;top:449px;overflow:visible" width="18" height="18" viewBox="0 0 18 18"><path d="M6 .8h10.8v16H1.2v-7" fill="none" stroke="#1a82e0" stroke-width="1.5"/><path d="M2.8 15.8L4.5 12.3 6.8 12.8 8.3 9.6 10.6 9.2 11.4 6 13.8 5 14.2 7.4 12.8 8.5 12.6 11.2 10 12.2 8.8 14.6 5.5 14.4 4.5 15.8z" fill="#8ec2f2"/><path d="M-.2 -1h5.6v8.2L2.6 10 -.2 7.2z" fill="#e87a10"/><circle cx="2.6" cy="2.6" r="1.1" fill="#222"/><circle cx="17.6" cy="12.2" r="1.5" fill="#e87a10"/><circle cx="15.2" cy="16.6" r="2.4" fill="#e87a10"/></svg>
<svg class="a" style="left:888px;top:449px;overflow:visible" width="18" height="18" viewBox="0 0 18 18"><path d="M9 .8L17 9 9 17.2 1 9z" fill="#f7f7f7" stroke="#8a2aa8" stroke-width="1.2"/><path d="M5 5l8 8M13 5l-8 8" stroke="#8a2aa8" stroke-width="1"/><path d="M6 3.5C4 6 4 12 6 14.5" fill="none" stroke="#8a2aa8" stroke-width="1"/></svg>
<svg class="a" style="left:916px;top:449px;overflow:visible" width="18" height="18" viewBox="0 0 18 18"><path d="M1 3h8l8 6-8 6H1l6-6z" fill="#f7f7f7" stroke="#1a82e0" stroke-width="1.2"/><path d="M5 15L12.5 5.5" stroke="#1a82e0" stroke-width="1.2"/></svg>
<svg class="a" style="left:944px;top:449px;overflow:visible" width="18" height="18" viewBox="0 0 18 18"><rect x="3.5" y="6.8" width="2.2" height="2.2" fill="#fff"/><rect x="7.8" y="6.8" width="2.2" height="2.2" fill="#fff"/><rect x="12" y="6.8" width="2.2" height="2.2" fill="#fff"/></svg>
<!-- /ICONS -->
<!-- STATUS -->
<div class="t" style="left:998px;top:982px;color:#e0e0e0;font-size:13.08px">-</div>
<div class="a" style="left:1007px;top:989px;width:100px;height:1px;background:#c8c8c8"></div>
<div class="a" style="left:1058px;top:984px;width:3px;height:11px;background:#d0d0d0"></div>
<div class="t" style="left:1112px;top:982px;color:#e0e0e0;font-size:14.17px">+</div>
<div class="t" style="left:1134px;top:983px;color:#e0e0e0;font-size:12.32px">110%</div>
<svg class="a" style="left:1176px;top:984px" width="16" height="12" viewBox="0 0 16 12" fill="none" stroke="#e0e0e0" stroke-width="1"><rect x=".5" y=".5" width="15" height="11" rx="2"/><path d="M4.5 3.5H3.5v5h1M11.5 3.5h1v5h-1"/></svg>
<!-- /STATUS -->
<!-- ARROW -->
<svg class="a" style="left:0;top:0" width="1209" height="1001" viewBox="0 0 1209 1001">
<path d="M515 691L1012 609" stroke="#f21c0e" stroke-width="3" stroke-linecap="round"/>
<path d="M1033 606L1008 602 1010.6 617.6z" fill="#f21c0e"/>
</svg>
<!-- /ARROW -->
</body></html>
